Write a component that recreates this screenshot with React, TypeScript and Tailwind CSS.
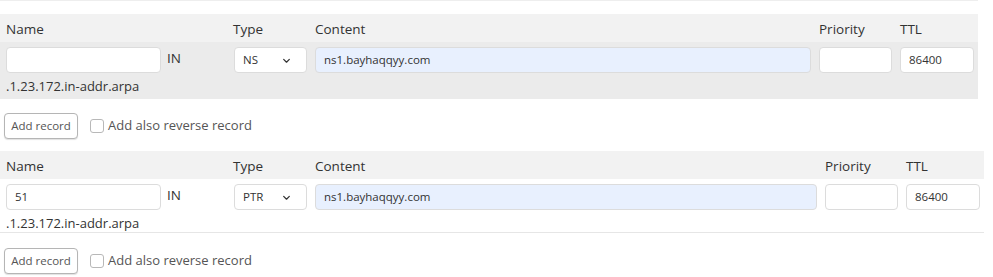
import React from 'react'

type Rec = {
    name: string
    type: string
    content: string
    priority: string
    ttl: string
}

const cols = "grid grid-cols-[161px_67px_81px_1fr_81px_84px]"

const Chevron = () => (
    <svg width="9" height="9" viewBox="0 0 16 16" fill="none" stroke="#333" strokeWidth="2.2" strokeLinecap="round" strokeLinejoin="round">
        <path d="M3 6l5 5 5-5" />
    </svg>
)

const RecordTable = ({ rec, shaded, width }: { rec: Rec; shaded: boolean; width: string }) => {
    const input = "h-[26px] rounded-[4px] border border-[#dcdcdc] bg-white px-2 text-[11.5px] text-[#333] flex items-center"
    return (
        <div className={width}>
            {/* header */}
            <div className={`${cols} h-[28px] items-center pt-[2px] bg-[#f2f2f2] text-[13.5px] text-[#333]`}>
                <div className="pl-[6px]">Name</div>
                <div></div>
                <div className="pl-[5px]">Type</div>
                <div className="pl-[6px]">Content</div>
                <div className="pl-[6px]">Priority</div>
                <div className="pl-[6px]">TTL</div>
            </div>
            {/* row */}
            <div className={`${cols} pt-[5px] ${shaded ? "bg-[#ebebeb] h-[57px]" : "bg-white h-[54px] border-b border-[#e6e6e6]"}`}>
                <div className="pl-[6px] flex flex-col">
                    <div className={input}>{rec.name}</div>
                    <div className="mt-[4px] -ml-[6px] pl-[6px] text-[13px] text-[#333] whitespace-nowrap">.1.23.172.in-addr.arpa</div>
                </div>
                <div className="pl-[6px] pt-[1px] text-[13.5px] text-[#333]">IN</div>
                <div className="pl-[6px] pr-[2px]">
                    <div className={`${input} justify-between pr-[15px]`}>
                        <span>{rec.type}</span>
                        <Chevron />
                    </div>
                </div>
                <div className="pl-[6px] pr-[2px]">
                    <div className={`${input} !bg-[#e8f0fe] border-[#d5dced]`}>{rec.content}</div>
                </div>
                <div className="pl-[6px] pr-[2px]">
                    <div className={input}>{rec.priority}</div>
                </div>
                <div className="pl-[6px] pr-[4px]">
                    <div className={input}>{rec.ttl}</div>
                </div>
            </div>
        </div>
    )
}

const AddRow = () => (
    <div className="flex items-center h-[26px] pl-[4px]">
        <button className="h-[26px] w-[74px] rounded-[4px] border border-[#b5b5b5] bg-white text-[11.5px] text-[#555] shadow-[0_1px_1px_rgba(0,0,0,0.12)]">
            Add record
        </button>
        <label className="flex items-center ml-[12px] text-[13px] text-[#555]">
            <span className="w-[14px] h-[14px] rounded-[3px] border border-[#b8b8b8] bg-white mr-[4px]"></span>
            Add also reverse record
        </label>
    </div>
)

export default function App() {
    return (
        <div className="w-[993px] h-[277px] bg-white font-['Open_Sans',sans-serif] overflow-hidden">
            <div className="w-[978px] h-px bg-[#eeeeee]"></div>
            <div className="mt-[13px]">
                <RecordTable
                    width="w-[978px]"
                    shaded={true}
                    rec={{ name: "", type: "NS", content: "ns1.bayhaqqyy.com", priority: "", ttl: "86400" }}
                />
            </div>
            <div className="mt-[14px]">
                <AddRow />
            </div>
            <div className="mt-[12px]">
                <RecordTable
                    width="w-[984px]"
                    shaded={false}
                    rec={{ name: "51", type: "PTR", content: "ns1.bayhaqqyy.com", priority: "", ttl: "86400" }}
                />
            </div>
            <div className="mt-[15px]">
                <AddRow />
            </div>
        </div>
    )
}
